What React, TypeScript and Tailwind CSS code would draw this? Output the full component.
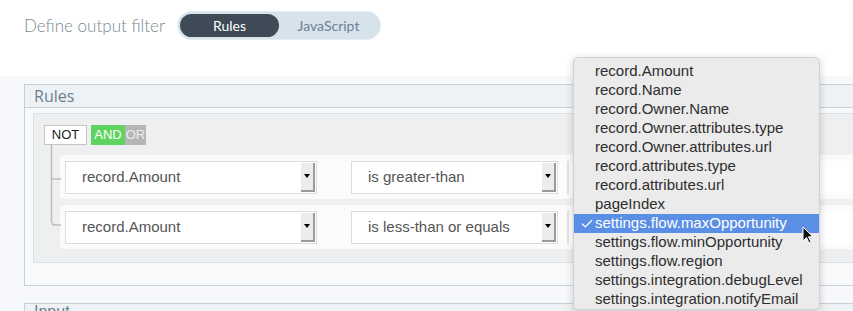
import { Check } from 'lucide-react'

const fields = [
    'record.Amount',
    'record.Name',
    'record.Owner.Name',
    'record.Owner.attributes.type',
    'record.Owner.attributes.url',
    'record.attributes.type',
    'record.attributes.url',
    'pageIndex',
    'settings.flow.maxOpportunity',
    'settings.flow.minOpportunity',
    'settings.flow.region',
    'settings.integration.debugLevel',
    'settings.integration.notifyEmail',
]

const Select = ({ value, width }: { value: string; width: string }) => (
    <div className={`flex h-[33px] items-stretch border border-[#dcdcdc] bg-white ${width}`}>
        <span className="flex flex-1 items-center pl-[16px] text-[15px] text-[#555]">{value}</span>
        <span className="my-[1px] mr-[1px] flex w-[14px] items-center justify-center border-r-2 border-b-2 border-[#9a9a9a] bg-[#ececec]">
            <span className="h-0 w-0 border-x-[3px] border-t-[4px] border-x-transparent border-t-black" />
        </span>
    </div>
)

const Row = ({ op }: { op: string }) => (
    <div className="flex h-[44px] items-center gap-[34px] rounded-l-[4px] bg-[#fbfbfb] pl-[5px]">
        <Select value="record.Amount" width="w-[252px]" />
        <Select value={op} width="w-[207px]" />
        <div className="-ml-[25px] h-[33px] w-[300px] border-l-2 border-[#e2e2e2] bg-white" />
    </div>
)

const App = () => {
    return (
        <div
            className="relative h-[311px] w-[853px] overflow-hidden bg-[#f6f8fb]"
            style={{ fontFamily: '"Liberation Sans", Arial, sans-serif' }}
        >
            <div className="flex h-[76px] items-start bg-white pl-[24px] pt-[12px]" style={{ fontFamily: 'Lato, sans-serif' }}>
                <span className="mt-[1px] w-[154px] text-[17px] font-light text-[#78898f]">Define output filter</span>
                <div className="flex h-[27px] w-[202px] items-center rounded-full bg-[#d6e3eb] p-[2px] ring-1 ring-[#e6eef3]">
                    <div className="flex h-[23px] w-[99px] items-center justify-center rounded-full bg-[#3e4a56] text-[14px] text-white">
                        Rules
                    </div>
                    <div className="flex flex-1 items-center justify-center text-[14px] text-[#6e8090]">JavaScript</div>
                </div>
            </div>

            <div className="pl-[24px] pt-[8px]">
                <div className="w-[900px] border border-[#c9cfd4] bg-[#f7f9fb]">
                    <div
                        className="flex h-[23px] items-center border-b border-[#c9cfd4] bg-[#eef2f5] pl-[9px] text-[16px] text-[#6a7f8f]"
                        style={{ fontFamily: '"Open Sans", sans-serif' }}
                    >
                        Rules
                    </div>
                    <div className="px-[8px] pb-[22px] pt-[5px]">
                        <div className="relative h-[150px] border border-[#dde0e3] bg-[#eeeff1] pl-[10px] pt-[11px]">
                            <div className="flex text-[13px]">
                                <div className="flex h-[20px] w-[43px] items-center justify-center border border-[#c4c4c4] bg-white text-[#222]">
                                    NOT
                                </div>
                                <div className="ml-[4px] flex h-[20px] w-[34px] items-center justify-center bg-[#5fd35f] text-white">
                                    AND
                                </div>
                                <div className="flex h-[20px] w-[21px] items-center justify-center bg-[#b5b5b5] text-[#eee]">OR</div>
                            </div>
                            <svg className="absolute left-[16px] top-[31px]" width="12" height="84" viewBox="0 0 12 84">
                                <path d="M1.5 0 V34 H11 M1.5 34 V76 Q1.5 80 5.5 80 H11" fill="none" stroke="#bdbdbd" strokeWidth="1.5" />
                            </svg>
                            <div className="ml-[16px] mt-[10px] flex flex-col gap-[6px]">
                                <Row op="is greater-than" />
                                <Row op="is less-than or equals" />
                            </div>
                        </div>
                    </div>
                </div>
                <div className="mt-[17px] h-[30px] w-[900px] border border-[#c9cfd4] bg-[#eef2f5] pl-[9px] text-[16px] leading-[16px] text-[#6a7f8f]">
                    Input
                </div>
            </div>

            <div className="absolute left-[573px] top-[57px] w-[247px] rounded-[5px] border border-[#d2d2d2] bg-[#ebebeb] pt-[4px] shadow-[0_2px_8px_rgba(0,0,0,0.18)]">
                {fields.map((f) => {
                    const active = f === 'settings.flow.maxOpportunity'
                    return (
                        <div
                            key={f}
                            className={`relative flex h-[19px] items-center pl-[21px] text-[15px] ${
                                active ? 'bg-[#5b8fe6] text-white' : 'text-[#2e2e2e]'
                            }`}
                        >
                            {active && <Check className="absolute left-[6px] h-[14px] w-[14px]" strokeWidth={2.2} />}
                            {f}
                        </div>
                    )
                })}
            </div>

            <svg className="absolute left-[802px] top-[226px]" width="13" height="19" viewBox="0 0 13 19">
                <path d="M1 1 V15 L4.5 11.5 L7 17 L9 16 L6.5 10.8 H11 Z" fill="#111" stroke="#fff" strokeWidth="1" />
            </svg>
        </div>
    )
}

export default App
